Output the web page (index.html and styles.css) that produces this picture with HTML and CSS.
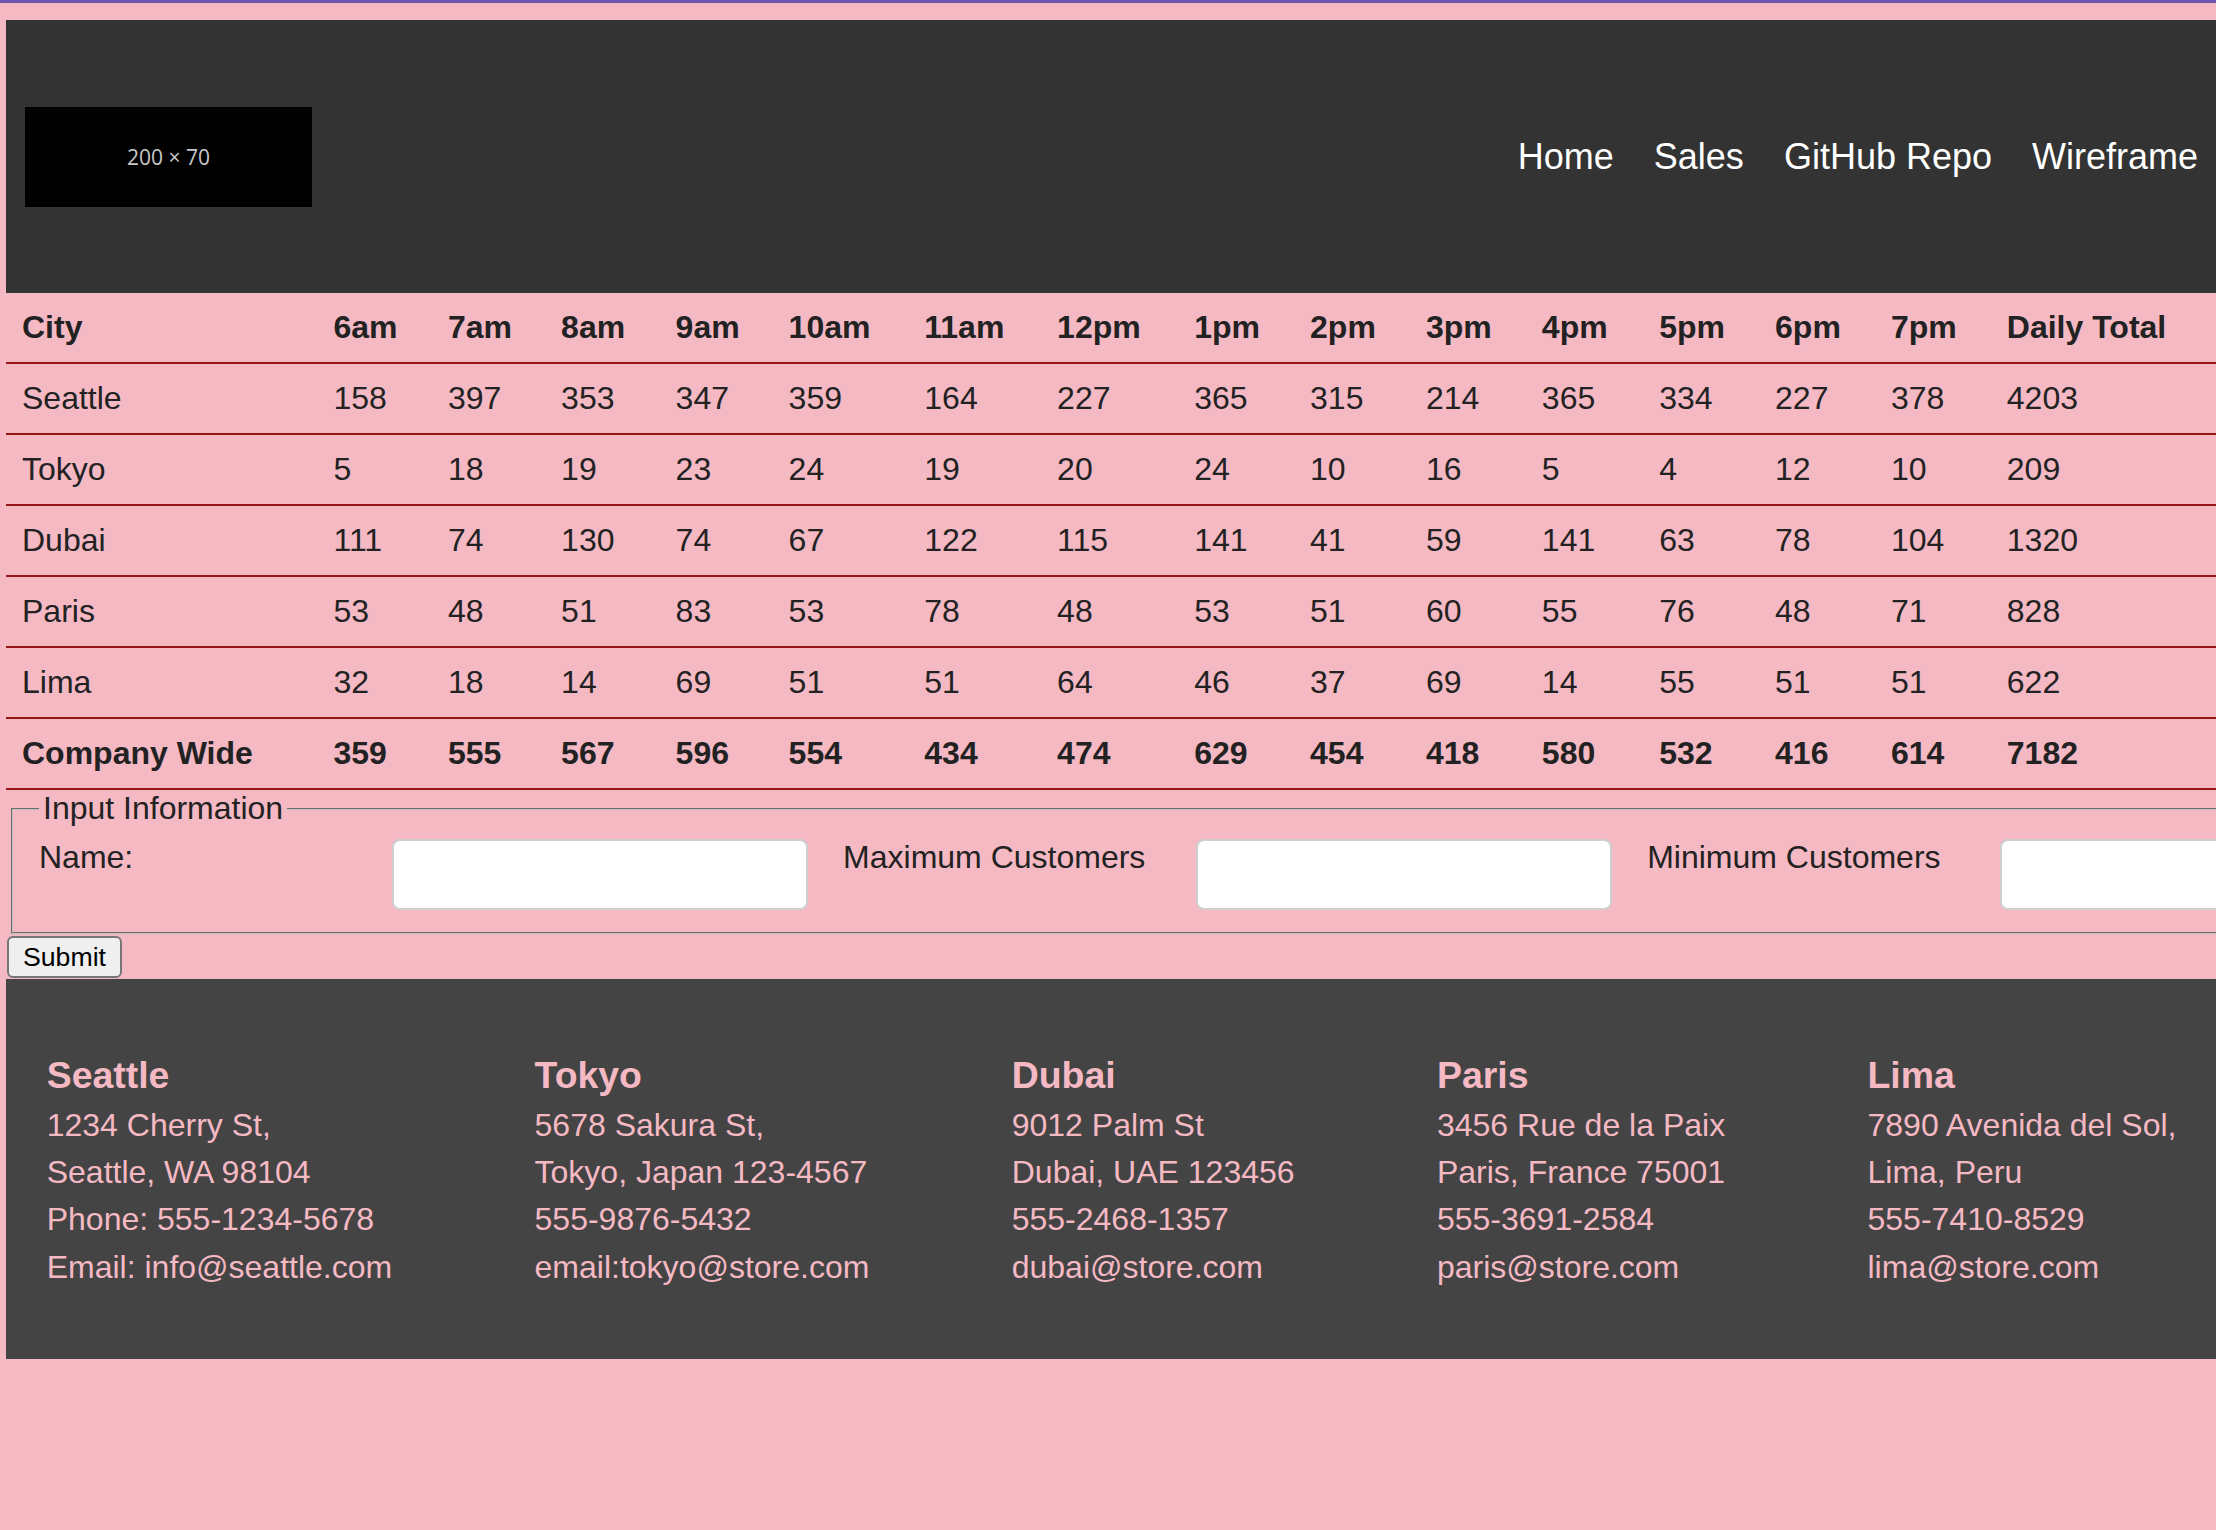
FILE: index.html
```html
<!DOCTYPE html>
<html lang="en">
<head>
<meta charset="utf-8">
<title>Sales</title>
<link rel="stylesheet" href="styles.css">
</head>
<body>
<header class="site-header">
  <div class="logo">200 × 70</div>
  <nav class="nav">
    <a href="#">Home</a>
    <a href="#">Sales</a>
    <a href="#">GitHub Repo</a>
    <a href="#">Wireframe</a>
  </nav>
</header>

<table class="sales">
  <thead>
    <tr><th>City</th><th>6am</th><th>7am</th><th>8am</th><th>9am</th><th>10am</th><th>11am</th><th>12pm</th><th>1pm</th><th>2pm</th><th>3pm</th><th>4pm</th><th>5pm</th><th>6pm</th><th>7pm</th><th>Daily Total</th></tr>
  </thead>
  <tbody>
    <tr><td>Seattle</td><td>158</td><td>397</td><td>353</td><td>347</td><td>359</td><td>164</td><td>227</td><td>365</td><td>315</td><td>214</td><td>365</td><td>334</td><td>227</td><td>378</td><td>4203</td></tr>
    <tr><td>Tokyo</td><td>5</td><td>18</td><td>19</td><td>23</td><td>24</td><td>19</td><td>20</td><td>24</td><td>10</td><td>16</td><td>5</td><td>4</td><td>12</td><td>10</td><td>209</td></tr>
    <tr><td>Dubai</td><td>111</td><td>74</td><td>130</td><td>74</td><td>67</td><td>122</td><td>115</td><td>141</td><td>41</td><td>59</td><td>141</td><td>63</td><td>78</td><td>104</td><td>1320</td></tr>
    <tr><td>Paris</td><td>53</td><td>48</td><td>51</td><td>83</td><td>53</td><td>78</td><td>48</td><td>53</td><td>51</td><td>60</td><td>55</td><td>76</td><td>48</td><td>71</td><td>828</td></tr>
    <tr><td>Lima</td><td>32</td><td>18</td><td>14</td><td>69</td><td>51</td><td>51</td><td>64</td><td>46</td><td>37</td><td>69</td><td>14</td><td>55</td><td>51</td><td>51</td><td>622</td></tr>
  </tbody>
  <tfoot>
    <tr><th>Company Wide</th><th>359</th><th>555</th><th>567</th><th>596</th><th>554</th><th>434</th><th>474</th><th>629</th><th>454</th><th>418</th><th>580</th><th>532</th><th>416</th><th>614</th><th>7182</th></tr>
  </tfoot>
</table>

<form class="store-form">
  <fieldset class="fields">
    <legend class="legend">Input Information</legend>
    <div class="field-row">
      <label class="field-label" for="name">Name:</label>
      <input class="field-input" id="name" type="text">
      <label class="field-label" for="max">Maximum Customers</label>
      <input class="field-input" id="max" type="text">
      <label class="field-label" for="min">Minimum Customers</label>
      <input class="field-input" id="min" type="text">
    </div>
  </fieldset>
  <button class="submit" type="submit">Submit</button>
</form>

<footer class="site-footer">
  <div class="store">
    <h3 class="store-name">Seattle</h3>
    <p class="store-line">1234 Cherry St,</p>
    <p class="store-line">Seattle, WA 98104</p>
    <p class="store-line">Phone: 555-1234-5678</p>
    <p class="store-line">Email: info@seattle.com</p>
  </div>
  <div class="store">
    <h3 class="store-name">Tokyo</h3>
    <p class="store-line">5678 Sakura St,</p>
    <p class="store-line">Tokyo, Japan 123-4567</p>
    <p class="store-line">555-9876-5432</p>
    <p class="store-line">email:tokyo@store.com</p>
  </div>
  <div class="store">
    <h3 class="store-name">Dubai</h3>
    <p class="store-line">9012 Palm St</p>
    <p class="store-line">Dubai, UAE 123456</p>
    <p class="store-line">555-2468-1357</p>
    <p class="store-line">dubai@store.com</p>
  </div>
  <div class="store">
    <h3 class="store-name">Paris</h3>
    <p class="store-line">3456 Rue de la Paix</p>
    <p class="store-line">Paris, France 75001</p>
    <p class="store-line">555-3691-2584</p>
    <p class="store-line">paris@store.com</p>
  </div>
  <div class="store">
    <h3 class="store-name">Lima</h3>
    <p class="store-line">7890 Avenida del Sol,</p>
    <p class="store-line">Lima, Peru</p>
    <p class="store-line">555-7410-8529</p>
    <p class="store-line">lima@store.com</p>
  </div>
</footer>
</body>
</html>
```

FILE: styles.css
```css
html {
  background: #f5b9c4;
  overflow-x: hidden;
}

body {
  margin: 0;
  padding: 0 0 0 6px;
  border-top: 3px solid #6f55b0;
  background: #f5b9c4;
  color: #222;
  font-family: "Liberation Sans", Arial, sans-serif;
  font-size: 32px;
  min-height: 1527px;
  box-sizing: border-box;
}

/* Header */
.site-header {
  margin-top: 17px;
  height: 273px;
  background: #333;
  display: flex;
  align-items: center;
  justify-content: space-between;
  padding: 0 18px 0 19px;
}

.logo {
  width: 287px;
  height: 100px;
  background: #000;
  color: #c8c8c8;
  font-family: "Open Sans", "DejaVu Sans", sans-serif;
  font-size: 21px;
  display: flex;
  align-items: center;
  justify-content: center;
}

.nav {
  display: flex;
  gap: 40px;
}

.nav a {
  color: #fff;
  text-decoration: none;
  font-size: 36px;
}

/* Table */
.sales {
  width: 100%;
  table-layout: fixed;
  border-collapse: collapse;
}

.sales th,
.sales td {
  text-align: left;
  padding: 16px 0 16px 16px;
  line-height: 37px;
  border-bottom: 2px solid #951616;
  white-space: nowrap;
  overflow: hidden;
}

.sales th { font-weight: bold; }

.sales thead th:nth-child(1) { width: 295.5px; }
.sales thead th:nth-child(2) { width: 98.5px; }
.sales thead th:nth-child(3) { width: 97.1px; }
.sales thead th:nth-child(4) { width: 98.5px; }
.sales thead th:nth-child(5) { width: 97px; }
.sales thead th:nth-child(6) { width: 119.7px; }
.sales thead th:nth-child(7) { width: 116.8px; }
.sales thead th:nth-child(8) { width: 121.1px; }
.sales thead th:nth-child(9) { width: 99.9px; }
.sales thead th:nth-child(10) { width: 99.9px; }
.sales thead th:nth-child(11) { width: 99.9px; }
.sales thead th:nth-child(12) { width: 101.3px; }
.sales thead th:nth-child(13) { width: 99.9px; }
.sales thead th:nth-child(14) { width: 99.9px; }
.sales thead th:nth-child(15) { width: 99.9px; }

/* Form */
.store-form {
  margin: 0;
}

.fields {
  margin: 0 0 2px 5px;
  padding: 12px 26px 22px 26px;
  border: 2px groove #c0c0c0;
}

.legend {
  padding: 0 4px;
  font-size: 32px;
}

.field-row {
  display: flex;
  align-items: flex-start;
  gap: 35px;
}

.field-label {
  flex: 0 0 317.5px;
  font-size: 32px;
  line-height: 37px;
}

.field-input {
  flex: 0 0 416.6px;
  box-sizing: border-box;
  height: 71px;
  margin: 0;
  border: 2px solid #cfcfcf;
  border-radius: 8px;
  background: #fff;
}

.submit {
  display: block;
  margin: 0 0 1px 1px;
  height: 42px;
  padding: 0 14px;
  font-family: "Liberation Sans", Arial, sans-serif;
  font-size: 26.67px;
  color: #000;
  background: #efefef;
  border: 2px solid #767676;
  border-radius: 6px;
}

/* Footer */
.site-footer {
  background: #444;
  display: flex;
  justify-content: space-between;
  padding: 72px 39.5px 68.5px 40.7px;
  color: #f5b9c4;
}

.store-name {
  margin: 0 0 3px;
  font-size: 37.44px;
  line-height: 48px;
}

.store-line {
  margin: 0;
  font-size: 32px;
  line-height: 47.2px;
  white-space: nowrap;
}
```
